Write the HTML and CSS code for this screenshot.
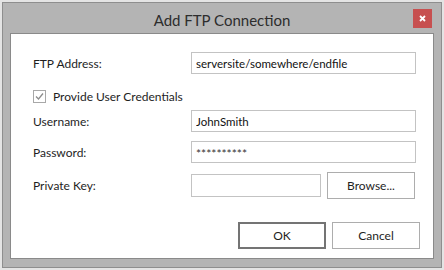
FILE: index.html
```html
<!DOCTYPE html>
<html lang="en">
<head>
  <meta charset="UTF-8" />
  <title>Add FTP Connection</title>
  <link rel="stylesheet" href="styles.css">
</head>
<body>
<div class="window">
  <div class="titlebar">
    <span></span>
    <h1 class="title">Add FTP Connection</h1>
    <button class="close" type="button">
      <svg width="7" height="7" viewBox="0 0 7 7"><path d="M1 1 L6 6 M6 1 L1 6" stroke="#fff" stroke-width="1.8"/></svg>
    </button>
  </div>

  <div class="panel">
    <div class="row r-address">
      <label class="label">FTP Address:</label>
      <input class="field" type="text" value="serversite/somewhere/endfile">
    </div>

    <div class="row r-check">
      <span class="checkbox">
        <svg width="11" height="11" viewBox="0 0 11 11"><path d="M2 5.5 L4.5 8 L9 2.5" fill="none" stroke="#8c8c8c" stroke-width="1.3"/></svg>
      </span>
      <span class="check-text">Provide User Credentials</span>
    </div>

    <div class="row r-user">
      <label class="label">Username:</label>
      <input class="field" type="text" value="JohnSmith">
    </div>

    <div class="row r-pass">
      <label class="label">Password:</label>
      <input class="field pass" type="text" value="**********">
    </div>

    <div class="row r-key">
      <label class="label">Private Key:</label>
      <input class="field key" type="text" value="">
      <button class="btn browse" type="button">Browse...</button>
    </div>

    <div class="actions">
      <button class="btn ok" type="button">OK</button>
      <button class="btn" type="button">Cancel</button>
    </div>
  </div>
</div>
</body>
</html>
```

FILE: styles.css
```css
* {
  margin: 0;
  padding: 0;
  box-sizing: border-box;
  font-family: 'Lato', 'Noto Sans', sans-serif;
}
body {
  background: #e4e4e4;
  width: 444px;
  height: 270px;
  padding: 2px;
  overflow: hidden;
}
.window {
  width: 440px;
  height: 266px;
  background: #b4b4b4;
  border: 1px solid #8e8e8e;
  padding: 0 7px 7px 7px;
}
.titlebar {
  height: 30px;
  display: grid;
  grid-template-columns: 1fr auto 1fr;
  align-items: start;
}
.title {
  font-size: 15px;
  font-weight: normal;
  color: #2d2d2d;
  line-height: 18px;
  margin-top: 8px;
}
.close {
  justify-self: end;
  margin-top: 6px;
  margin-right: 2px;
  width: 19px;
  height: 19px;
  background: #c75050;
  border: none;
  display: flex;
  align-items: center;
  justify-content: center;
}
.panel {
  background: #fff;
  border: 1px solid #8a8a8a;
  height: 226px;
  padding: 0 17px 0 22px;
}
.row {
  display: flex;
  align-items: center;
}
.label {
  width: 158px;
  font-size: 12px;
  color: #1e1e1e;
}
.field {
  flex: 1;
  height: 22px;
  border: 1px solid #c3c3c3;
  padding: 0 4px;
  font-size: 11.5px;
  color: #111;
  outline: none;
}
.r-address {
  margin-top: 18px;
}
.r-check {
  margin-top: 13px;
  height: 18px;
}
.checkbox {
  width: 13px;
  height: 13px;
  border: 1px solid #a8a8a8;
  display: flex;
  align-items: center;
  justify-content: center;
}
.check-text {
  margin-left: 7px;
  font-size: 12px;
  color: #1e1e1e;
}
.r-user {
  margin-top: 5px;
}
.r-pass {
  margin-top: 9px;
}
.pass {
  font-size: 12px;
  color: #333;
  padding-top: 2px;
}
.r-key {
  margin-top: 9px;
  height: 27px;
}
.key {
  flex: none;
  width: 130px;
  height: 23px;
}
.btn {
  width: 88px;
  height: 27px;
  background: #fff;
  border: 1px solid #adadad;
  font-size: 12px;
  color: #1e1e1e;
}
.browse {
  margin-left: 6px;
}
.actions {
  display: flex;
  justify-content: flex-end;
  gap: 6px;
  margin-top: 23px;
  margin-right: -4px;
}
.ok {
  border: 2px solid #747474;
}
```
